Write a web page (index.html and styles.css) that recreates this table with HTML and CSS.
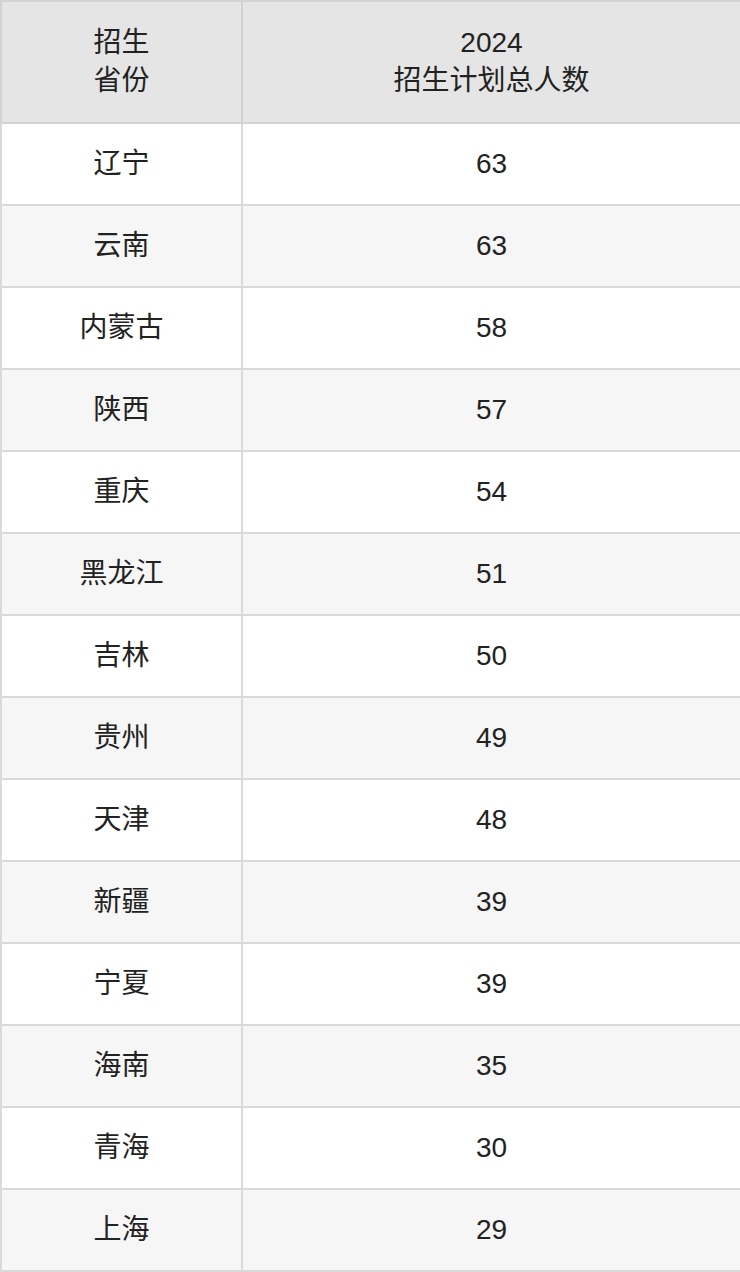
FILE: index.html
```html
<!DOCTYPE html>
<html lang="zh">
<head>
<meta charset="utf-8">
<link rel="stylesheet" href="styles.css">
</head>
<body>
<table class="plan">
  <colgroup><col class="c1"><col class="c2"></colgroup>
  <thead>
    <tr><th>招生<br>省份</th><th>2024<br>招生计划总人数</th></tr>
  </thead>
  <tbody>
    <tr><td>辽宁</td><td>63</td></tr>
    <tr><td>云南</td><td>63</td></tr>
    <tr><td>内蒙古</td><td>58</td></tr>
    <tr><td>陕西</td><td>57</td></tr>
    <tr><td>重庆</td><td>54</td></tr>
    <tr><td>黑龙江</td><td>51</td></tr>
    <tr><td>吉林</td><td>50</td></tr>
    <tr><td>贵州</td><td>49</td></tr>
    <tr><td>天津</td><td>48</td></tr>
    <tr><td>新疆</td><td>39</td></tr>
    <tr><td>宁夏</td><td>39</td></tr>
    <tr><td>海南</td><td>35</td></tr>
    <tr><td>青海</td><td>30</td></tr>
    <tr><td>上海</td><td>29</td></tr>
  </tbody>
</table>
</body>
</html>
```
FILE: styles.css
```css
html, body {
  margin: 0;
  padding: 0;
  background: #ffffff;
}
.plan {
  width: 740px;
  border-collapse: collapse;
  table-layout: fixed;
  font-family: "Liberation Sans", "Noto Sans CJK SC", sans-serif;
  font-size: 28px;
  color: #222222;
}
.c1 { width: 241px; }
.c2 { width: 499px; }
.plan th, .plan td {
  border: 2px solid #dadada;
  text-align: center;
  vertical-align: middle;
  padding: 0;
}
.plan th {
  background: #e5e5e5;
  border-color: #d2d2d2;
  font-weight: normal;
  height: 120px;
  line-height: 38px;
}
.plan td {
  height: 80px;
  line-height: 32px;
}
.plan tbody tr:nth-child(even) td {
  background: #f6f6f6;
}
```
